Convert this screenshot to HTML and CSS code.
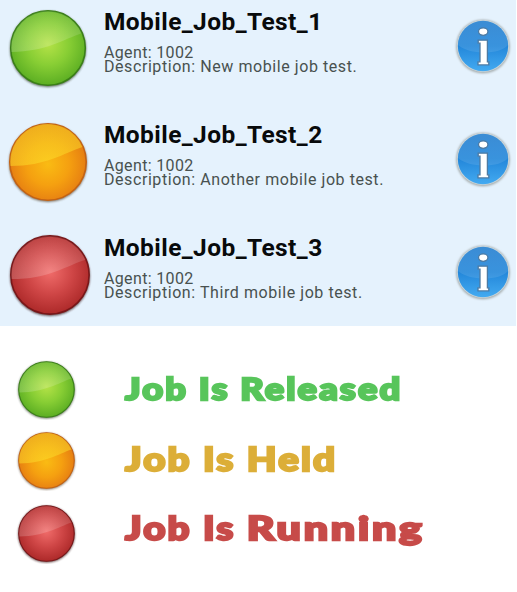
FILE: index.html
```html
<!DOCTYPE html>
<html lang="en">
<head>
<meta charset="utf-8">
<title>Mobile Jobs</title>
<link rel="stylesheet" href="styles.css">
</head>
<body>
<svg class="defs" aria-hidden="true">
  <defs>
    <radialGradient id="green" cx=".5" cy=".45" r=".56"><stop offset="0" stop-color="#b4e247"/><stop offset=".5" stop-color="#88ce34"/><stop offset="1" stop-color="#5aad22"/></radialGradient>
    <radialGradient id="orange" cx=".5" cy=".53" r=".55"><stop offset="0" stop-color="#fabb13"/><stop offset=".5" stop-color="#f5a010"/><stop offset="1" stop-color="#e37812"/></radialGradient>
    <radialGradient id="red" cx=".5" cy=".46" r=".57"><stop offset="0" stop-color="#f06c6a"/><stop offset=".5" stop-color="#cf4646"/><stop offset="1" stop-color="#a92626"/></radialGradient>
    <linearGradient id="gloss" x1="0" y1="0" x2="0" y2="1"><stop offset="0" stop-color="#fff" stop-opacity=".08"/><stop offset="1" stop-color="#fff" stop-opacity=".18"/></linearGradient>
    <linearGradient id="goldgloss" x1="0" y1="0" x2="0" y2="1"><stop offset="0" stop-color="#f6d024" stop-opacity=".6"/><stop offset="1" stop-color="#fddf2c" stop-opacity=".5"/></linearGradient>
    <linearGradient id="blue" x1="0" y1="0" x2="0" y2="1"><stop offset="0" stop-color="#2580d0"/><stop offset=".5" stop-color="#2387da"/><stop offset="1" stop-color="#43aaf1"/></linearGradient>
    <filter id="soft" x="-20%" y="-20%" width="140%" height="140%"><feGaussianBlur stdDeviation="1.2"/></filter>
    <symbol id="orb-green" viewBox="0 0 84 84">
      <circle cx="42" cy="43" r="39" fill="#303c26" opacity=".75" filter="url(#soft)"/>
      <circle cx="42" cy="42" r="38.2" fill="url(#green)" stroke="#3b8018" stroke-width="1.6"/>
      <path d="M4.5 46A37.6 37.6 0 0 1 76.5 27C58 33 40 46 4.5 46Z" fill="url(#gloss)"/>
    </symbol>
    <symbol id="orb-orange" viewBox="0 0 84 84">
      <circle cx="42" cy="43" r="39" fill="#5d4a33" opacity=".75" filter="url(#soft)"/>
      <circle cx="42" cy="42" r="38.2" fill="url(#orange)" stroke="#c46314" stroke-width="1.6"/>
      <path d="M4.5 46A37.6 37.6 0 0 1 76.5 27C58 33 40 46 4.5 46Z" fill="url(#goldgloss)"/>
    </symbol>
    <symbol id="orb-red" viewBox="0 0 84 84">
      <circle cx="42" cy="43" r="39" fill="#3a1d1d" opacity=".8" filter="url(#soft)"/>
      <circle cx="42" cy="42" r="38.2" fill="url(#red)" stroke="#791719" stroke-width="1.6"/>
      <path d="M4.5 46A37.6 37.6 0 0 1 76.5 27C58 33 40 46 4.5 46Z" fill="url(#gloss)"/>
    </symbol>
    <symbol id="info" viewBox="0 0 60 60">
      <circle cx="30" cy="30.5" r="26.8" fill="#a2a9a9" filter="url(#soft)"/>
      <circle cx="30" cy="30" r="26.1" fill="#c9d5da"/>
      <circle cx="30" cy="30" r="25.2" fill="url(#blue)"/>
      <path d="M5 29A25 25 0 0 1 55 29C47 39 16 39 5 29Z" fill="#fff" opacity=".1"/>
      <g fill="#fff" stroke="#4d7ba4" stroke-width="1.3">
        <ellipse cx="30.2" cy="15.6" rx="4.7" ry="3.7"/>
        <path d="M25.2 24.2h9.2v21.6h1.4v3.1H25v-3.1h2V27.2h-1.8Z"/>
      </g>
    </symbol>
  </defs>
</svg>
<main class="jobs">
  <article class="job">
    <div class="status"><svg class="orb s1"><use href="#orb-green"/></svg></div>
    <div class="copy"><h2>Mobile_Job_Test_1</h2><p class="agent">Agent: 1002</p><p>Description: New mobile job test.</p></div>
    <svg class="info"><use href="#info"/></svg>
  </article>
  <article class="job">
    <div class="status"><svg class="orb s2"><use href="#orb-orange"/></svg></div>
    <div class="copy"><h2>Mobile_Job_Test_2</h2><p class="agent">Agent: 1002</p><p>Description: Another mobile job test.</p></div>
    <svg class="info"><use href="#info"/></svg>
  </article>
  <article class="job">
    <div class="status"><svg class="orb s3"><use href="#orb-red"/></svg></div>
    <div class="copy"><h2>Mobile_Job_Test_3</h2><p class="agent">Agent: 1002</p><p>Description: Third mobile job test.</p></div>
    <svg class="info"><use href="#info"/></svg>
  </article>
</main>
<section class="legend">
  <div class="key"><svg><use href="#orb-green"/></svg><span class="released">Job Is Released</span></div>
  <div class="key"><svg><use href="#orb-orange"/></svg><span class="held">Job Is Held</span></div>
  <div class="key"><svg><use href="#orb-red"/></svg><span class="running">Job Is <b>Running</b></span></div>
</section>
</body>
</html>
```
FILE: styles.css
```css
* { box-sizing: border-box; }
body { margin: 0; background: #fff; font-family: Roboto, sans-serif; overflow: hidden; }
.defs { position: absolute; width: 0; height: 0; }
.jobs { width: 516px; height: 326px; background: #e5f2fd; overflow: hidden; }
.job { display: grid; grid-template-columns: 104px 1fr 64px; height: 113px; }
.status { padding: 6px 0 0 5px; }
.orb { display: block; overflow: visible; }
.s1 { width: 82px; height: 82px; margin: 1px 0 0 2px; }
.s2 { width: 84px; height: 84px; margin: 1px 0 0 1px; }
.s3 { width: 86px; height: 86px; margin: 0 0 0 2px; }
.copy { padding-top: 7px; white-space: nowrap; }
h2 { margin: 0 0 10px; font-size: 24.5px; line-height: 29px; font-weight: 700; letter-spacing: .42px; color: #080a0b; }
p { margin: 0; font-size: 16px; line-height: 14px; letter-spacing: .57px; color: #48514f; }
.agent { letter-spacing: .35px; }
.info { width: 60px; height: 60px; margin: 15.5px 0 0 .5px; overflow: visible; }
.legend { display: grid; grid-template-rows: 71px 73px 72px; padding: 28px 0 0 16px; }
.key { display: grid; grid-template-columns: 109px max-content; }
.key svg { width: 61px; height: 61px; margin-top: 5px; overflow: visible; }
.key span { font-family: Lato, sans-serif; font-weight: 900; line-height: 42px; letter-spacing: 1.8px; white-space: nowrap; -webkit-text-stroke: 2.3px currentColor; transform: scaleX(1.17); transform-origin: left; }
.released { font-size: 31px; color: #58c55b; margin-top: 13px; }
.held { font-size: 33px; color: #dcae38; margin-top: 12px; }
.running { font-size: 33px; color: #c74b49; margin-top: 8px; }
.running b { display: inline-block; font-weight: inherit; letter-spacing: 2.2px; transform: scaleX(1.11); transform-origin: left; }
```
